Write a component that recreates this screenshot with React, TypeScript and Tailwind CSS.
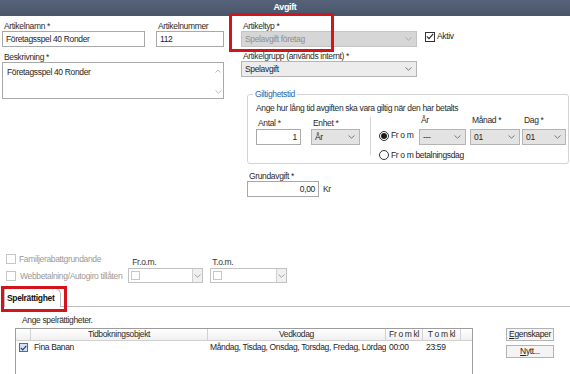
import React from "react";

const FONT = { fontFamily: '"Liberation Sans", Arial, sans-serif' };

function Chevron({ color = "#7a7a7a" }: { color?: string }) {
  return (
    <svg width="7" height="4" viewBox="0 0 7 4" className="shrink-0">
      <path d="M0.5 0.5 L3.5 3.2 L6.5 0.5" fill="none" stroke={color} strokeWidth="0.9" />
    </svg>
  );
}

function Label({ children, className = "" }: { children: React.ReactNode; className?: string }) {
  return <div className={`h-[9px] whitespace-nowrap leading-[9px] text-[#2a2a2a] ${className}`}>{children}</div>;
}

function Input({ value, className = "", right = false }: { value: string; className?: string; right?: boolean }) {
  return (
    <div
      className={`flex h-[16px] items-center border border-[#a9a9a9] bg-white px-[3px] text-[#1e1e1e] ${
        right ? "justify-end" : ""
      } ${className}`}
    >
      {value}
    </div>
  );
}

function Select({
  value,
  className = "",
  disabled = false,
  gray = false,
}: {
  value: string;
  className?: string;
  disabled?: boolean;
  gray?: boolean;
}) {
  return (
    <div
      className={`flex h-[16px] items-center justify-between border pl-[3px] pr-[4px] ${
        disabled
          ? "border-[#c4c4c4] bg-[#d6d6d6] text-[#8e8e8e]"
          : gray
          ? "border-[#b4b4b4] bg-[#e3e3e3] text-[#1e1e1e]"
          : "border-[#b4b4b4] bg-[#ececec] text-[#1e1e1e]"
      } ${className}`}
    >
      <span className="whitespace-nowrap">{value}</span>
      <Chevron color={disabled ? "#a8a8a8" : "#6e6e6e"} />
    </div>
  );
}

function DateSelect({ className = "" }: { className?: string }) {
  return (
    <div className={`flex h-[15px] items-center justify-between border border-[#c2c2c2] bg-white pl-[2px] ${className}`}>
      <span className="h-[9px] w-[9px] border border-[#c8c8c8]" />
      <span className="flex h-full w-[10px] items-center justify-center border-l border-[#d0d0d0] bg-[#f0f0f0]">
        <Chevron color="#9a9a9a" />
      </span>
    </div>
  );
}

function Check({ checked = false, disabled = false }: { checked?: boolean; disabled?: boolean }) {
  return (
    <span
      className={`flex h-[10px] w-[10px] shrink-0 items-center justify-center border bg-white ${
        disabled ? "border-[#c6c6c6]" : "border-[#333]"
      }`}
    >
      {checked && (
        <svg width="8" height="7" viewBox="0 0 8 7">
          <path d="M0.8 3.4 L3 5.6 L7.2 0.8" fill="none" stroke="#222" strokeWidth="1.1" />
        </svg>
      )}
    </span>
  );
}

function Radio({ checked = false }: { checked?: boolean }) {
  return (
    <span className="flex h-[10px] w-[10px] shrink-0 items-center justify-center rounded-full border border-[#333] bg-white">
      {checked && <span className="h-[6px] w-[6px] rounded-full bg-[#1e1e1e]" />}
    </span>
  );
}

function Button({ access, rest }: { access: string; rest: string }) {
  return (
    <div className="flex h-[13px] w-[48px] items-center justify-center border border-[#b2b2b2] bg-[#f4f4f4] text-[#1e1e1e]">
      <span className="underline">{access}</span>
      {rest}
    </div>
  );
}

export default function App() {
  return (
    <div
      className="relative h-[374px] w-[570px] overflow-hidden bg-white text-[8.5px] tracking-[-0.35px]"
      style={FONT}
    >
      {/* Titelrad */}
      <div className="flex h-[16px] items-center justify-center bg-gradient-to-b from-[#56627a] to-[#4a5667] text-[9px] font-bold text-white">
        Avgift
      </div>

      <div className="flex">
        {/* Vänster kolumn */}
        <div className="ml-[2px] w-[222px] pt-[6px]">
          <div className="flex">
            <div className="w-[143px]">
              <Label className="pl-[2px]">Artikelnamn *</Label>
              <Input value="Företagsspel 40 Ronder" />
            </div>
            <div className="ml-[11px] w-[68px]">
              <Label className="pl-[2px]">Artikelnummer</Label>
              <Input value="112" />
            </div>
          </div>
          <Label className="mt-[6px] pl-[2px]">Beskrivning *</Label>
          <div className="flex h-[37px] w-[222px] border border-[#a9a9a9] bg-white pl-[4px] pt-[3px] text-[#1e1e1e]">
            <span className="flex-1">Företagsspel 40 Ronder</span>
            <div className="flex w-[10px] flex-col items-center justify-between pb-[4px] pt-[3px]">
              <svg width="6" height="4" viewBox="0 0 6 4">
                <path d="M0.5 3.5 L3 1 L5.5 3.5" fill="none" stroke="#b5b5b5" strokeWidth="0.9" />
              </svg>
              <Chevron color="#b5b5b5" />
            </div>
          </div>
        </div>

        {/* Höger kolumn */}
        <div className="ml-[17px] pt-[6px]">
          <div className="flex items-end">
            <div className="w-[176px]">
              <Label className="pl-[2px]">Artikeltyp *</Label>
              <Select value="Spelavgift företag" disabled />
            </div>
            <div className="mb-[4px] ml-[8px] flex items-center gap-[2px] text-[#1e1e1e]">
              <Check checked />
              <span>Aktiv</span>
            </div>
          </div>
          <Label className="mt-[5px] pl-[2px]">Artikelgrupp (används internt) *</Label>
          <Select value="Spelavgift" className="w-[176px]" />

          <fieldset className="ml-[6px] mt-[13px] h-[74px] w-[322px] rounded-[3px] border border-[#d4d4d4] pl-[8px]">
            <legend className="-ml-[3px] px-[2px] leading-[9px] text-[#2f62a8]">Giltighetstid</legend>
            <div className="mt-[5px] leading-[9px] text-[#2a2a2a]">
              Ange hur lång tid avgiften ska vara giltig när den har betalts
            </div>
            <div className="mt-[6px] flex">
              <div className="w-[45px]">
                <Label className="pl-[2px]">Antal *</Label>
                <Input value="1" right className="mt-[1px] h-[15px]" />
              </div>
              <div className="ml-[10px] w-[49px]">
                <Label className="pl-[2px]">Enhet *</Label>
                <Select value="År" gray className="mt-[1px]" />
              </div>
              <div className="ml-[10px] mt-[-2px] h-[38px] w-px bg-[#d2d2d2]" />
              <div className="ml-[8px] flex flex-col">
                <div className="mt-[-3px] flex items-end">
                  <div className="mb-[3px] flex w-[40px] items-center gap-[2px] text-[#1e1e1e]">
                    <Radio checked />
                    <span>Fr o m</span>
                  </div>
                  <div className="w-[47px]">
                    <Label className="pl-[2px]">År</Label>
                    <Select value="---" gray className="mt-[4px]" />
                  </div>
                  <div className="ml-[4px] w-[50px]">
                    <Label className="pl-[2px]">Månad *</Label>
                    <Select value="01" gray className="mt-[4px]" />
                  </div>
                  <div className="ml-[2px] w-[44px]">
                    <Label className="pl-[2px]">Dag *</Label>
                    <Select value="01" gray className="mt-[4px]" />
                  </div>
                </div>
                <div className="mt-[4px] flex items-center gap-[2px] whitespace-nowrap text-[#1e1e1e]">
                  <Radio />
                  <span>Fr o m betalningsdag</span>
                </div>
              </div>
            </div>
          </fieldset>

          <div className="ml-[6px] mt-[8px]">
            <Label className="pl-[2px]">Grundavgift *</Label>
            <div className="flex items-center gap-[4px]">
              <Input value="0,00" right className="w-[72px]" />
              <span className="text-[#2a2a2a]">Kr</span>
            </div>
          </div>
        </div>
      </div>

      {/* Familjerabatt / webbetalning */}
      <div className="ml-[6px] mt-[56px] flex">
        <div className="flex flex-col gap-[5px] text-[#9a9a9a]">
          <div className="flex h-[12px] items-center gap-[3px]">
            <Check disabled />
            <span>Familjerabattgrundande</span>
          </div>
          <div className="flex h-[12px] items-center gap-[4px]">
            <Check disabled />
            <span>Webbetalning/Autogiro tillåten</span>
          </div>
        </div>
        <div className="ml-[6px] pt-[5px]">
          <Label className="pl-[4px] text-[#333]">Fr.o.m.</Label>
          <DateSelect className="mt-[1px] w-[75px]" />
        </div>
        <div className="ml-[7px] pt-[5px]">
          <Label className="pl-[2px] text-[#333]">T.o.m.</Label>
          <DateSelect className="mt-[1px] w-[77px]" />
        </div>
      </div>

      {/* Flik */}
      <div className="mt-[5px] flex items-end">
        <div className="ml-[4px] flex h-[19px] items-center rounded-tr-[6px] border border-b-0 border-[#bdbdbd] bg-white pl-[2px] pr-[6px] font-bold text-[#111]">
          Spelrättighet
        </div>
        <div className="h-px flex-1 bg-[#bdbdbd]" />
      </div>

      <div className="ml-[22px] mt-[9px] leading-[9px] text-[#2a2a2a]">Ange spelrättigheter.</div>

      <div className="mt-[3px] flex">
        {/* Tabell */}
        <div className="ml-[15px] h-[60px] w-[458px] border-l border-r border-t border-[#9c9c9c]">
          <div className="flex h-[12px] border-b border-[#d0d0d0] bg-gradient-to-b from-white to-[#f0f0f0] text-[#2a2a2a]">
            <div className="w-[15px] border-r border-[#d2d2d2]" />
            <div className="flex w-[177px] items-center justify-center border-r border-[#d2d2d2]">Tidbokningsobjekt</div>
            <div className="flex w-[178px] items-center justify-center border-r border-[#d2d2d2]">Vedkodag</div>
            <div className="flex w-[37px] items-center justify-center border-r border-[#d2d2d2]">Fr o m kl</div>
            <div className="flex w-[38px] items-center justify-center border-r border-[#d2d2d2]">T o m kl</div>
          </div>
          <div className="flex h-[13px] items-center text-[#1e1e1e]">
            <div className="flex w-[15px] justify-center">
              <span className="flex h-[9px] w-[9px] items-center justify-center border border-[#3d6fb5] bg-[#d5e3f5]">
                <svg width="7" height="6" viewBox="0 0 7 6">
                  <path d="M0.8 2.8 L2.7 4.8 L6.3 0.8" fill="none" stroke="#1d3f78" strokeWidth="1.2" />
                </svg>
              </span>
            </div>
            <div className="w-[177px] pl-[3px]">Fina Banan</div>
            <div className="w-[178px] overflow-hidden whitespace-nowrap pl-[2px]">
              Måndag, Tisdag, Onsdag, Torsdag, Fredag, Lördag
            </div>
            <div className="w-[37px] pl-[3px]">00:00</div>
            <div className="w-[38px] pl-[3px]">23:59</div>
          </div>
        </div>

        <div className="ml-[33px] flex flex-col gap-[4px]">
          <Button access="E" rest="genskaper" />
          <Button access="N" rest="ytt..." />
        </div>
      </div>

      {/* Markeringar */}
      <div className="pointer-events-none absolute left-[229px] top-[13px] h-[39px] w-[105px] border-[3px] border-[#d3141c]" />
      <div className="pointer-events-none absolute left-[1px] top-[286px] h-[26px] w-[66px] border-[3px] border-[#d3141c]" />
    </div>
  );
}
